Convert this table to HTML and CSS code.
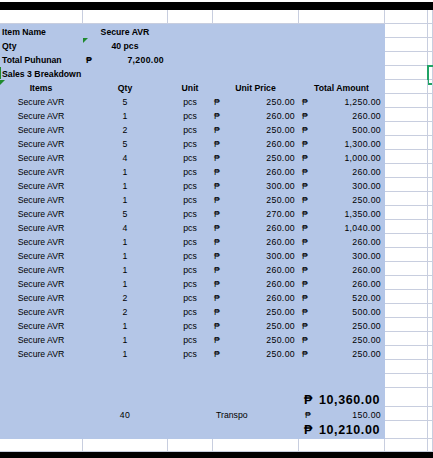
FILE: index.html
```html
<!DOCTYPE html>
<html>
<head>
<meta charset="utf-8">
<link rel="stylesheet" href="styles.css">
</head>
<body>
<div class="bar top"></div>
<div class="sheet">
  <div class="row"><div class="c"></div><div class="c"></div><div class="c"></div><div class="c"></div><div class="c"></div><div class="c"></div><div class="c"></div></div>

  <div class="row"><div class="c b l bold">Item Name</div><div class="c b ctr bold">Secure AVR</div><div class="c b"></div><div class="c b"></div><div class="c b"></div><div class="c"></div><div class="c"></div></div>
  <div class="row"><div class="c b l bold">Qty</div><div class="c b ctr bold tri">40 pcs</div><div class="c b"></div><div class="c b"></div><div class="c b"></div><div class="c"></div><div class="c"></div></div>
  <div class="row"><div class="c b l bold">Total Puhunan</div><div class="c b acc e bold"><span>₱</span><span class="n">7,200.00</span></div><div class="c b"></div><div class="c b"></div><div class="c b"></div><div class="c"></div><div class="c"></div></div>
  <div class="row"><div class="c b l bold span2 gl">Sales 3 Breakdown</div><div class="c b"></div><div class="c b"></div><div class="c b"></div><div class="c"></div><div class="c sel"></div></div>
  <div class="row"><div class="c b ctr bold tri">Items</div><div class="c b ctr bold">Qty</div><div class="c b ctr bold">Unit</div><div class="c b ctr bold">Unit Price</div><div class="c b ctr bold">Total Amount</div><div class="c"></div><div class="c"></div></div>

  <div class="row"><div class="c b ctr">Secure AVR</div><div class="c b ctr n">5</div><div class="c b ctr">pcs</div><div class="c b acc d"><span>₱</span><span class="n">250.00</span></div><div class="c b acc e"><span>₱</span><span class="n">1,250.00</span></div><div class="c"></div><div class="c"></div></div>
  <div class="row"><div class="c b ctr">Secure AVR</div><div class="c b ctr n">1</div><div class="c b ctr">pcs</div><div class="c b acc d"><span>₱</span><span class="n">260.00</span></div><div class="c b acc e"><span>₱</span><span class="n">260.00</span></div><div class="c"></div><div class="c"></div></div>
  <div class="row"><div class="c b ctr">Secure AVR</div><div class="c b ctr n">2</div><div class="c b ctr">pcs</div><div class="c b acc d"><span>₱</span><span class="n">250.00</span></div><div class="c b acc e"><span>₱</span><span class="n">500.00</span></div><div class="c"></div><div class="c"></div></div>
  <div class="row"><div class="c b ctr">Secure AVR</div><div class="c b ctr n">5</div><div class="c b ctr">pcs</div><div class="c b acc d"><span>₱</span><span class="n">260.00</span></div><div class="c b acc e"><span>₱</span><span class="n">1,300.00</span></div><div class="c"></div><div class="c"></div></div>
  <div class="row"><div class="c b ctr">Secure AVR</div><div class="c b ctr n">4</div><div class="c b ctr">pcs</div><div class="c b acc d"><span>₱</span><span class="n">250.00</span></div><div class="c b acc e"><span>₱</span><span class="n">1,000.00</span></div><div class="c"></div><div class="c"></div></div>
  <div class="row"><div class="c b ctr">Secure AVR</div><div class="c b ctr n">1</div><div class="c b ctr">pcs</div><div class="c b acc d"><span>₱</span><span class="n">260.00</span></div><div class="c b acc e"><span>₱</span><span class="n">260.00</span></div><div class="c"></div><div class="c"></div></div>
  <div class="row"><div class="c b ctr">Secure AVR</div><div class="c b ctr n">1</div><div class="c b ctr">pcs</div><div class="c b acc d"><span>₱</span><span class="n">300.00</span></div><div class="c b acc e"><span>₱</span><span class="n">300.00</span></div><div class="c"></div><div class="c"></div></div>
  <div class="row"><div class="c b ctr">Secure AVR</div><div class="c b ctr n">1</div><div class="c b ctr">pcs</div><div class="c b acc d"><span>₱</span><span class="n">250.00</span></div><div class="c b acc e"><span>₱</span><span class="n">250.00</span></div><div class="c"></div><div class="c"></div></div>
  <div class="row"><div class="c b ctr">Secure AVR</div><div class="c b ctr n">5</div><div class="c b ctr">pcs</div><div class="c b acc d"><span>₱</span><span class="n">270.00</span></div><div class="c b acc e"><span>₱</span><span class="n">1,350.00</span></div><div class="c"></div><div class="c"></div></div>
  <div class="row"><div class="c b ctr">Secure AVR</div><div class="c b ctr n">4</div><div class="c b ctr">pcs</div><div class="c b acc d"><span>₱</span><span class="n">260.00</span></div><div class="c b acc e"><span>₱</span><span class="n">1,040.00</span></div><div class="c"></div><div class="c"></div></div>
  <div class="row"><div class="c b ctr">Secure AVR</div><div class="c b ctr n">1</div><div class="c b ctr">pcs</div><div class="c b acc d"><span>₱</span><span class="n">260.00</span></div><div class="c b acc e"><span>₱</span><span class="n">260.00</span></div><div class="c"></div><div class="c"></div></div>
  <div class="row"><div class="c b ctr">Secure AVR</div><div class="c b ctr n">1</div><div class="c b ctr">pcs</div><div class="c b acc d"><span>₱</span><span class="n">300.00</span></div><div class="c b acc e"><span>₱</span><span class="n">300.00</span></div><div class="c"></div><div class="c"></div></div>
  <div class="row"><div class="c b ctr">Secure AVR</div><div class="c b ctr n">1</div><div class="c b ctr">pcs</div><div class="c b acc d"><span>₱</span><span class="n">260.00</span></div><div class="c b acc e"><span>₱</span><span class="n">260.00</span></div><div class="c"></div><div class="c"></div></div>
  <div class="row"><div class="c b ctr">Secure AVR</div><div class="c b ctr n">1</div><div class="c b ctr">pcs</div><div class="c b acc d"><span>₱</span><span class="n">260.00</span></div><div class="c b acc e"><span>₱</span><span class="n">260.00</span></div><div class="c"></div><div class="c"></div></div>
  <div class="row"><div class="c b ctr">Secure AVR</div><div class="c b ctr n">2</div><div class="c b ctr">pcs</div><div class="c b acc d"><span>₱</span><span class="n">260.00</span></div><div class="c b acc e"><span>₱</span><span class="n">520.00</span></div><div class="c"></div><div class="c"></div></div>
  <div class="row"><div class="c b ctr">Secure AVR</div><div class="c b ctr n">2</div><div class="c b ctr">pcs</div><div class="c b acc d"><span>₱</span><span class="n">250.00</span></div><div class="c b acc e"><span>₱</span><span class="n">500.00</span></div><div class="c"></div><div class="c"></div></div>
  <div class="row"><div class="c b ctr">Secure AVR</div><div class="c b ctr n">1</div><div class="c b ctr">pcs</div><div class="c b acc d"><span>₱</span><span class="n">250.00</span></div><div class="c b acc e"><span>₱</span><span class="n">250.00</span></div><div class="c"></div><div class="c"></div></div>
  <div class="row"><div class="c b ctr">Secure AVR</div><div class="c b ctr n">1</div><div class="c b ctr">pcs</div><div class="c b acc d"><span>₱</span><span class="n">250.00</span></div><div class="c b acc e"><span>₱</span><span class="n">250.00</span></div><div class="c"></div><div class="c"></div></div>
  <div class="row"><div class="c b ctr">Secure AVR</div><div class="c b ctr n">1</div><div class="c b ctr">pcs</div><div class="c b acc d"><span>₱</span><span class="n">250.00</span></div><div class="c b acc e"><span>₱</span><span class="n">250.00</span></div><div class="c"></div><div class="c"></div></div>

  <div class="row"><div class="c b"></div><div class="c b"></div><div class="c b"></div><div class="c b"></div><div class="c b"></div><div class="c"></div><div class="c"></div></div>
  <div class="row"><div class="c b"></div><div class="c b"></div><div class="c b"></div><div class="c b"></div><div class="c b"></div><div class="c"></div><div class="c"></div></div>

  <div class="row t1"><div class="c b"></div><div class="c b"></div><div class="c b"></div><div class="c b"></div><div class="c b acc big"><span>₱</span><span class="n">10,360.00</span></div><div class="c"></div><div class="c"></div></div>
  <div class="row"><div class="c b"></div><div class="c b ctr n">40</div><div class="c b"></div><div class="c b l3">Transpo</div><div class="c b acc tr"><span>₱</span><span class="n">150.00</span></div><div class="c"></div><div class="c"></div></div>
  <div class="row t2"><div class="c b"></div><div class="c b"></div><div class="c b"></div><div class="c b"></div><div class="c b acc big"><span>₱</span><span class="n">10,210.00</span></div><div class="c"></div><div class="c"></div></div>

  <div class="row last"><div class="c"></div><div class="c"></div><div class="c"></div><div class="c"></div><div class="c"></div><div class="c"></div><div class="c"></div></div>
</div>
<div class="bar bot"></div>
</body>
</html>
```

FILE: styles.css
```css
* {
  box-sizing: border-box;
}

html,
body {
  margin: 0;
  padding: 0;
  background: #ffffff;
}

body {
  width: 433px;
  height: 458px;
  overflow: hidden;
  font-family: "Liberation Sans", "DejaVu Sans", sans-serif;
  font-size: 8.7px;
  color: #000000;
}

.bar {
  background: #000000;
  height: 8px;
}

.bar.top {
  margin-top: 2px;
}

.bar.bot {
  height: 6px;
}

.row {
  display: grid;
  grid-template-columns: 83px 85px 45px 86px 86px 43px 5px;
  height: 14px;
}

.row.t1 {
  height: 19px;
}

.row.t2 {
  height: 18px;
}

.row.last {
  height: 13px;
}

.c {
  position: relative;
  display: flex;
  align-items: flex-end;
  min-width: 0;
  line-height: 8.7px;
  white-space: nowrap;
  border-right: 1px solid #c8cedf;
  border-bottom: 1px solid #c8cedf;
}

.b {
  background: #b4c6e7;
  border-color: transparent;
}

.l {
  padding-left: 2px;
}

.l3 {
  padding-left: 3px;
}

.ctr {
  justify-content: center;
}

.bold {
  font-weight: 700;
}

.span2 {
  grid-column: span 2;
}

.n {
  letter-spacing: 0.35px;
}

.acc {
  justify-content: space-between;
  padding: 0 3px 0 3px;
}

.acc.d {
  padding-left: 1px;
}

.acc.tr {
  padding-left: 6px;
}

.big {
  font-size: 12.5px;
  line-height: 12.5px;
  font-weight: 700;
  padding-left: 5px;
  padding-right: 4px;
}

.big .n {
  letter-spacing: 0.6px;
}

.t2 .big {
  padding-bottom: 2px;
}

.tri::before {
  content: "";
  position: absolute;
  left: 0;
  top: 0;
  border-top: 5px solid #1f8a2e;
  border-right: 5px solid transparent;
}

.gl::after {
  content: "";
  position: absolute;
  left: 0;
  top: 1px;
  bottom: 0;
  width: 1px;
  background: #1f8a2e;
}

.sel::after {
  content: "";
  position: absolute;
  left: -1px;
  top: -1px;
  width: 12px;
  height: 16px;
  border: 2px solid #21a366;
}
```
